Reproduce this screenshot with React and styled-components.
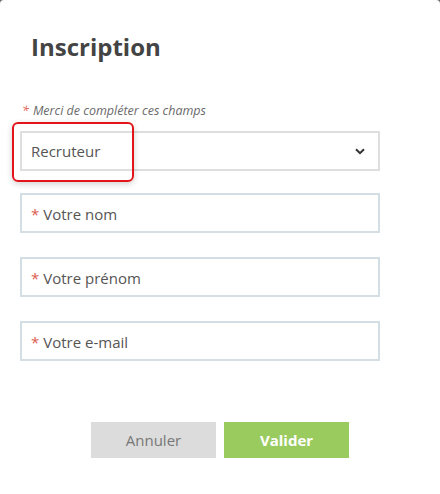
import React from 'react';
import styled, { createGlobalStyle } from 'styled-components';

const GlobalStyle = createGlobalStyle`
  html, body {
    margin: 0;
    padding: 0;
    background: #6b6b6b;
  }
  body {
    font-family: 'Open Sans', 'Liberation Sans', sans-serif;
  }
`;

// Modal shell
const Modal = styled.div`
  position: relative;
  width: 440px;
  height: 494px;
  box-sizing: border-box;
  background: #fff;
  border-radius: 4px 4px 0 0;
  padding: 32px 60px 0 20px;
`;

const Title = styled.h1`
  margin: 0 0 0 11px;
  font-size: 24px;
  font-weight: 700;
  color: #444;
  line-height: 30px;
`;

const Notice = styled.p`
  margin: 41px 0 0 2px;
  font-size: 12.5px;
  font-style: italic;
  color: #6a6a6a;
  line-height: 16px;
`;

const Star = styled.span`
  color: #e0604e;
  margin-right: ${p => p.$gap || 3}px;
`;

const Form = styled.form`
  display: flex;
  flex-direction: column;
  gap: 24px;
  margin-top: 12px;
`;

const SelectWrap = styled.div`
  position: relative;
  margin-bottom: -2px;
`;

const Select = styled.select`
  appearance: none;
  width: 360px;
  height: 40px;
  box-sizing: border-box;
  border: 2px solid #dedede;
  background: #fff;
  padding: 0 0 0 9px;
  font-family: inherit;
  font-size: 15px;
  color: #555;
  outline: none;
`;

const Chevron = styled.svg`
  position: absolute;
  right: 15px;
  top: 17px;
  pointer-events: none;
`;

// annotation drawn over the select
const Highlight = styled.div`
  position: absolute;
  left: -8px;
  top: -9px;
  width: 122px;
  height: 60px;
  box-sizing: border-box;
  border: 2px solid #e3151a;
  border-radius: 6px;
  box-shadow: 0 2px 6px rgba(0, 0, 0, 0.18);
  pointer-events: none;
`;

const Field = styled.label`
  display: flex;
  align-items: center;
  width: 360px;
  height: 40px;
  box-sizing: border-box;
  border: 2px solid #d3dfe5;
  padding: 1px 9px 0;
  font-size: 15px;
  color: #555;
`;

const Buttons = styled.div`
  display: flex;
  justify-content: center;
  gap: 8px;
  margin: 61px 0 0 40px;
`;

const Button = styled.button`
  width: 125px;
  height: 36px;
  border: none;
  font-family: inherit;
  font-size: 15px;
  font-weight: ${p => (p.$primary ? 700 : 400)};
  color: ${p => (p.$primary ? '#fff' : '#777')};
  background: ${p => (p.$primary ? '#9acb5f' : '#dcdcdc')};
`;

const fields = ['Votre nom', 'Votre prénom', 'Votre e-mail'];

export default function App() {
  return (
    <>
      <GlobalStyle />
      <Modal>
        <Title>Inscription</Title>
        <Notice>
          <Star $gap={4}>*</Star>Merci de compléter ces champs
        </Notice>
        <Form>
          <SelectWrap>
            <Select defaultValue="recruteur">
              <option value="recruteur">Recruteur</option>
              <option value="candidat">Candidat</option>
            </Select>
            <Chevron width="10" height="7" viewBox="0 0 10 7">
              <path d="M1 1.2 L5 5.2 L9 1.2" fill="none" stroke="#333" strokeWidth="2" />
            </Chevron>
            <Highlight />
          </SelectWrap>
          {fields.map(f => (
            <Field key={f}>
              <Star $gap={4}>*</Star>
              {f}
            </Field>
          ))}
        </Form>
        <Buttons>
          <Button type="button">Annuler</Button>
          <Button type="button" $primary>Valider</Button>
        </Buttons>
      </Modal>
    </>
  );
}
